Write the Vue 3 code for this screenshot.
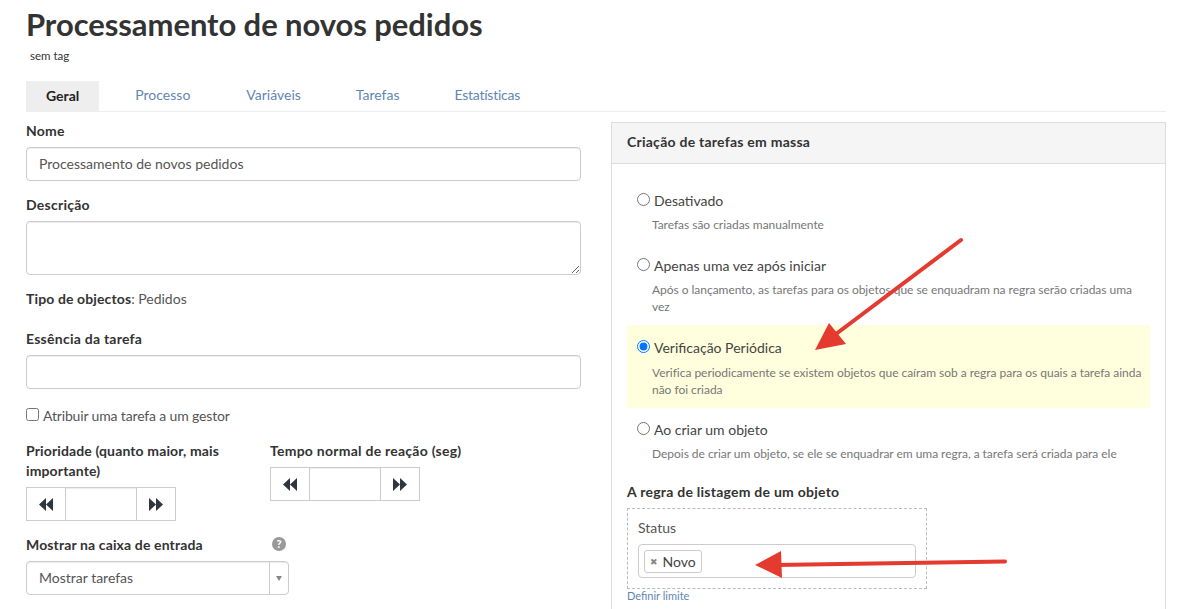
<script setup>
const tabs = ['Processo', 'Variáveis', 'Tarefas', 'Estatísticas']
const modes = [
  { label: 'Desativado', desc: 'Tarefas são criadas manualmente', cls: 'm1' },
  { label: 'Apenas uma vez após iniciar', desc: 'Após o lançamento, as tarefas para os objetos que se enquadram na regra serão criadas uma vez', cls: 'm2' },
  { label: 'Verificação Periódica', desc: 'Verifica periodicamente se existem objetos que caíram sob a regra para os quais a tarefa ainda não foi criada', cls: 'm3', on: true },
  { label: 'Ao criar um objeto', desc: 'Depois de criar um objeto, se ele se enquadrar em uma regra, a tarefa será criada para ele', cls: 'm4' },
]
</script>

<template>
  <div class="page">
    <h1>Processamento de novos pedidos</h1>
    <div class="tag">sem tag</div>
    <nav class="tabs">
      <a class="tab active">Geral</a>
      <a v-for="t in tabs" :key="t" class="tab">{{ t }}</a>
    </nav>
    <div class="columns">
      <section class="left">
        <label class="lbl l-nome">Nome</label>
        <input class="field" value="Processamento de novos pedidos" />
        <label class="lbl l-desc">Descrição</label>
        <textarea class="field area"></textarea>
        <div class="type"><b>Tipo de objectos</b>: Pedidos</div>
        <label class="lbl l-ess">Essência da tarefa</label>
        <input class="field" />
        <label class="check"><input type="checkbox" /><span>Atribuir uma tarefa a um gestor</span></label>
        <div class="pair">
          <div class="pri">
            <div class="lbl two tight">Prioridade (quanto maior, mais importante)</div>
            <div class="stepper">
              <span class="sbtn"><svg width="14" height="13" viewBox="0 0 14 13"><path d="M7 0v13L0 6.5zM14 0v13L7 6.5z" fill="#2f3640"/></svg></span>
              <span class="sval"></span>
              <span class="sbtn"><svg width="14" height="13" viewBox="0 0 14 13"><path d="M0 0v13l7-6.5zM7 0v13l7-6.5z" fill="#2f3640"/></svg></span>
            </div>
          </div>
          <div class="tempo">
            <div class="lbl two">Tempo normal de reação (seg)</div>
            <div class="stepper">
              <span class="sbtn"><svg width="14" height="13" viewBox="0 0 14 13"><path d="M7 0v13L0 6.5zM14 0v13L7 6.5z" fill="#2f3640"/></svg></span>
              <span class="sval"></span>
              <span class="sbtn"><svg width="14" height="13" viewBox="0 0 14 13"><path d="M0 0v13l7-6.5zM7 0v13l7-6.5z" fill="#2f3640"/></svg></span>
            </div>
          </div>
        </div>
        <div class="inbox">
          <div class="inbox-head">
            <span class="lbl tight">Mostrar na caixa de entrada</span>
            <span class="help">?</span>
          </div>
          <div class="select">
            <span class="sel-text">Mostrar tarefas</span>
            <span class="sel-arrow"><i></i></span>
          </div>
        </div>
      </section>
      <section class="panel">
        <header class="panel-head">Criação de tarefas em massa</header>
        <div class="panel-body">
          <div v-for="m in modes" :key="m.label" class="mode" :class="[m.cls, { on: m.on }]">
            <label class="mode-line"><input type="radio" name="mode" :checked="m.on" /><span>{{ m.label }}</span></label>
            <p>{{ m.desc }}</p>
          </div>
          <div class="rule-title">A regra de listagem de um objeto</div>
          <div class="rule">
            <div class="status">Status</div>
            <div class="chips"><span class="chip"><span class="x">✖</span>Novo</span></div>
          </div>
          <a class="limit">Definir limite</a>
        </div>
      </section>
    </div>
    <svg class="arrows" width="1182" height="609" viewBox="0 0 1182 609">
      <path d="M961 240L832 337" stroke="#e53a30" stroke-width="4" stroke-linecap="round" fill="none"/>
      <path d="M815 350L829 323 846 344z" fill="#e53a30"/>
      <path d="M1005 561.5L775 565" stroke="#e53a30" stroke-width="4" stroke-linecap="round" fill="none"/>
      <path d="M755 565L781 551 782 578z" fill="#e53a30"/>
    </svg>
  </div>
</template>

<style>
html, body { margin: 0; background: #fff; overflow: hidden; }
</style>

<style scoped>
.page {
  position: relative;
  width: 1182px;
  height: 609px;
  overflow: hidden;
  box-sizing: border-box;
  padding: 0 16px 0 26px;
  font-family: Lato, "Open Sans", sans-serif;
  font-size: 14px;
  color: #333;
}
h1 {
  margin: 0;
  padding-top: 4px;
  font-size: 31px;
  line-height: 41px;
  font-weight: 700;
  color: #333;
  letter-spacing: -.07px;
}
.tag { margin: 3px 0 0 4px; font-size: 11.5px; line-height: 16px; color: #333; }
.tabs { display: flex; margin-top: 17px; height: 30px; border-bottom: 1px solid #eee; }
.tab { padding: 0 20px; line-height: 28px; height: 30px; margin-right: 15px; color: #5f86b3; box-sizing: border-box; }
.tab:nth-child(2) { margin-right: 16px; }
.tab:nth-child(5) { letter-spacing: -.25px; }
.tab.active { background: #eee; color: #222; font-weight: 700; margin-right: 16px; line-height: 29px; }
.columns { display: flex; gap: 30px; margin-top: 10px; }
.left { width: 555px; flex: none; display: flex; flex-direction: column; }
.lbl { display: block; font-weight: 700; line-height: 20px; color: #333; letter-spacing: .25px; }
.lbl.tight { letter-spacing: .13px; }
.l-nome { margin-bottom: 6px; margin-top: -1px; }
.field {
  display: block;
  width: 555px;
  height: 34px;
  box-sizing: border-box;
  border: 1px solid #ccc;
  border-radius: 4px;
  padding: 0 12px 2px;
  font: inherit;
  color: #555;
  background: #fff;
  box-shadow: inset 0 1px 1px rgba(0,0,0,.075);
  outline: none;
  margin: 0;
}
.area { height: 54px; padding: 6px 12px; resize: vertical; }
.l-desc { margin: 14px 0 6px; }
.type { margin-top: 14px; line-height: 20px; color: #555; }
.type b { color: #333; letter-spacing: .12px; }
.l-ess { margin: 20px 0 6px; }
.check { display: flex; align-items: center; margin-top: 16px; height: 20px; color: #555; letter-spacing: -.15px; }
.check input { margin: 0 4px 0 0; width: 13px; height: 13px; position: relative; top: -1px; }
.pair { display: flex; margin-top: 16px; gap: 15px; }
.pri { width: 229px; }
.two { margin-bottom: 6px; }
.stepper { display: flex; width: 150px; height: 34px; box-sizing: border-box; border: 1px solid #ccc; }
.sbtn { width: 38px; flex: none; display: flex; align-items: center; justify-content: center; }
.sval { flex: 1; border-left: 1px solid #ccc; border-right: 1px solid #ccc; box-shadow: inset 0 1px 1px rgba(0,0,0,.075); }
.inbox { margin-top: 14px; width: 263px; }
.inbox-head { display: flex; justify-content: space-between; align-items: center; height: 20px; margin-bottom: 6px; }
.help {
  width: 14px; height: 14px; border-radius: 50%; background: #999; color: #fff;
  font-size: 11px; font-weight: 900; line-height: 14px; text-align: center; margin: -2px 3px 0 0;
}
.select {
  display: flex; height: 34px; box-sizing: border-box; border: 1px solid #ccc; border-radius: 4px;
  box-shadow: inset 0 1px 1px rgba(0,0,0,.075); color: #555;
}
.sel-text { flex: 1; padding-left: 12px; line-height: 32px; }
.sel-arrow { width: 18px; border-left: 1px solid #ccc; display: flex; align-items: center; justify-content: center; }
.sel-arrow i { width: 0; height: 0; border: 3px solid transparent; border-top: 5px solid #888; border-bottom: 0; }
.panel { width: 555px; flex: none; box-sizing: border-box; border: 1px solid #ddd; border-bottom: 0; height: 500px; }
.panel-head { height: 40px; line-height: 38px; padding-left: 15px; background: #f5f5f5; border-bottom: 1px solid #ddd; font-weight: 700; color: #333; letter-spacing: .25px; }
.panel-body { padding: 0 15px; position: relative; }
.mode { padding-left: 25px; position: relative; }
.mode-line { display: flex; align-items: center; height: 20px; margin-left: -15px; color: #444; }
.mode-line input { margin: 0 4px 2px 0; width: 13px; height: 13px; }
.mode p { margin: 6px 0 0; font-size: 12px; line-height: 17px; color: #777; letter-spacing: -.03px; }
.m1 { margin-top: 26px; }
.m2 { margin-top: 22px; }
.m3 { margin-top: 10px; padding-top: 12px; padding-bottom: 10px; background: #ffffdd; }
.m3 p { margin-top: 7px; }
.m4 { margin-top: 11px; }
.rule-title { margin-top: 20px; font-weight: 700; line-height: 20px; letter-spacing: .25px; }
.rule { margin-top: 6px; width: 300px; height: 81px; box-sizing: border-box; border: 1px dashed #bbb; padding: 9px 10px; }
.status { line-height: 20px; color: #555; }
.chips { margin-top: 6px; height: 34px; box-sizing: border-box; border: 1px solid #ccc; border-radius: 4px; padding: 5px; }
.chip { display: inline-flex; align-items: center; height: 23px; box-sizing: border-box; border: 1px solid #ccc; border-radius: 3px; padding: 0 5px; color: #444; }
.x { font-size: 9px; font-family: "DejaVu Sans", sans-serif; color: #888; margin-right: 5px; }
.limit { display: block; margin-top: 0; font-size: 11px; line-height: 14px; color: #5f86b3; }
.arrows { position: absolute; left: 0; top: 0; pointer-events: none; }
</style>
